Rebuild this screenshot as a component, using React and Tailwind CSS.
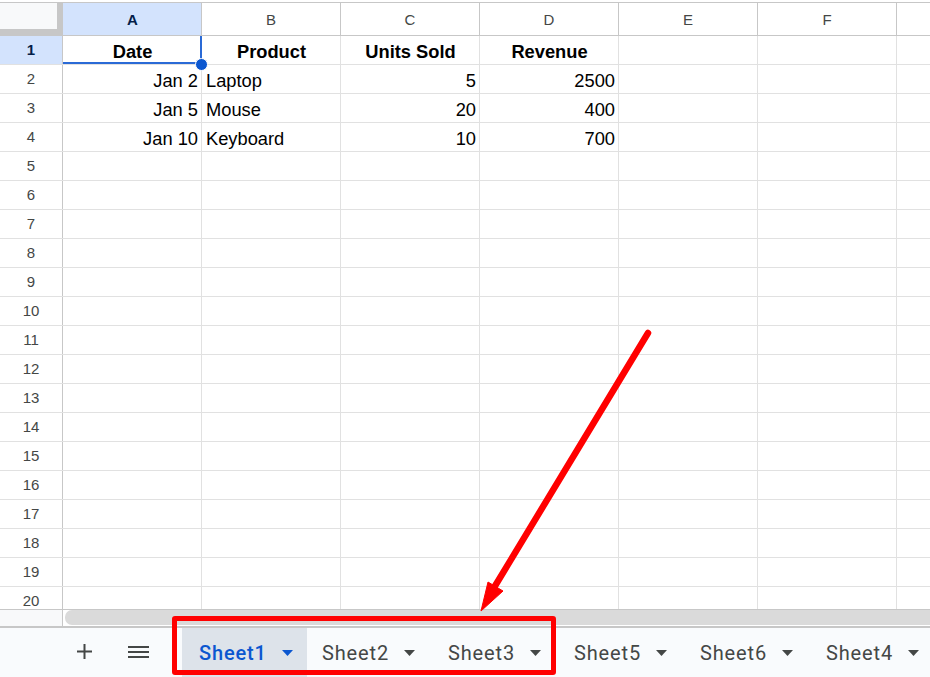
import React from "react";

const COLS = ["A", "B", "C", "D", "E", "F", ""];
const DATA = [
  ["Date", "Product", "Units Sold", "Revenue"],
  ["Jan 2", "Laptop", "5", "2500"],
  ["Jan 5", "Mouse", "20", "400"],
  ["Jan 10", "Keyboard", "10", "700"],
];
const ROWS = Array.from({ length: 20 }, (_, i) => i + 1);
const TABS = [
  { name: "Sheet1", cls: "w-[125px] bg-[#dde3ea] text-[#0b57d0] font-medium pl-[17px]", caret: "text-[#0b57d0]" },
  { name: "Sheet2", cls: "w-[126px] pl-[15px]" },
  { name: "Sheet3", cls: "w-[126px] pl-[15px]" },
  { name: "Sheet5", cls: "w-[126px] pl-[15px]" },
  { name: "Sheet6", cls: "w-[126px] pl-[15px]" },
  { name: "Sheet4", cls: "w-[126px] pl-[15px]" },
];

function Caret({ className }) {
  return (
    <svg width="11" height="6" viewBox="0 0 11 6" className={className}>
      <path d="M0 0h11L5.5 6z" fill="currentColor" />
    </svg>
  );
}

function cellClass(row, col) {
  if (row === 1) return "justify-center font-bold pl-[1px]";
  if (col === 1) return "justify-start pl-[4px]";
  return "justify-end pr-[3px]";
}

function Row({ n }) {
  const values = DATA[n - 1] || [];
  return (
    <div className="flex h-[29px] shrink-0 border-b border-[#e1e1e1]">
      <div
        className={
          "w-[63px] shrink-0 flex items-center justify-center pt-[1px] border-r border-[#c7c7c7] text-[15px] " +
          (n === 1 ? "bg-[#d3e3fd] font-bold text-[#041e49]" : "bg-white text-[#444746]")
        }
      >
        {n}
      </div>
      {COLS.map((c, i) => (
        <div
          key={c}
          className={
            "w-[139px] shrink-0 flex items-center pt-[3px] border-r border-[#e1e1e1] text-[18.3px] text-black " +
            cellClass(n, i)
          }
        >
          {values[i]}
        </div>
      ))}
    </div>
  );
}

export default function App() {
  return (
    <div className="relative w-[930px] h-[677px] overflow-hidden bg-white font-['Liberation_Sans',Arial,sans-serif]">
      {/* column header */}
      <div className="flex h-[34px] mt-[2px] border-y border-[#c7c7c7] box-border">
        <div className="w-[63px] shrink-0 border-r-[6px] border-[#c7c7c7]">
          <div className="h-[26px] bg-[#f8f9fa] border-b-[6px] border-[#c7c7c7] box-content" />
        </div>
        {COLS.map((c, i) => (
          <div
            key={c}
            className={
              "w-[139px] shrink-0 flex items-center justify-center pt-[3px] border-r border-[#c7c7c7] text-[15px] " +
              (i === 0 ? "bg-[#d3e3fd] font-bold text-[#041e49] pl-[1px]" : "text-[#444746]")
            }
          >
            {c}
          </div>
        ))}
      </div>

      {/* sheet cells */}
      <div className="relative h-[573px] overflow-hidden">
        {ROWS.map(n => (
          <Row key={n} n={n} />
        ))}
        {/* active cell outline */}
        <div className="absolute left-[63px] top-0 w-[139px] h-[28px] border-r-2 border-b-2 border-[#2a6ad6]" />
        <div className="absolute left-[195px] top-[22px] w-[13px] h-[13px] rounded-full bg-[#0b57d0] border border-white" />
      </div>

      {/* scroll bar */}
      <div className="flex h-[17px] border-t border-[#c7c7c7] bg-white">
        <div className="w-[63px] shrink-0 bg-[#f8f9fa] border-r border-[#c7c7c7]" />
        <div className="flex-1 h-[15px] ml-[2px] rounded-l-[7px] bg-[#dadada]" />
      </div>

      {/* tab bar */}
      <div className="flex h-[51px] border-t-2 border-[#c7c7c7] bg-[#f9fbfd] font-['Roboto',sans-serif] text-[20px] text-[#444746] tracking-[0.85px]">
        <div className="w-[182px] shrink-0 flex items-center pb-[2px] pl-[77px] gap-[36px]">
          <svg width="15" height="15" viewBox="0 0 15 15" className="text-[#444746] shrink-0">
            <path d="M7.5 0v15M0 7.5h15" stroke="currentColor" strokeWidth="2" />
          </svg>
          <svg width="21" height="14" viewBox="0 0 21 14" className="text-[#444746] shrink-0">
            <path d="M0 2h21M0 7h21M0 12h21" stroke="currentColor" strokeWidth="2" />
          </svg>
        </div>
        {TABS.map(t => (
          <div key={t.name} className={"shrink-0 flex items-center gap-[15px] " + t.cls}>
            <span>{t.name}</span>
            <Caret className={t.caret} />
          </div>
        ))}
      </div>

      {/* annotation: red box and arrow */}
      <div className="absolute left-[172px] top-[616px] w-[384px] h-[59px] rounded-[3px] border-[5px] border-[#ff0000]" />
      <svg className="absolute left-0 top-0 pointer-events-none" width="930" height="677" viewBox="0 0 930 677">
        <path d="M648 333L495 586" stroke="#ff0000" strokeWidth="6.5" strokeLinecap="round" fill="none" />
        <path d="M481 611L488 582L503 591z" fill="#ff0000" stroke="#ff0000" strokeWidth="1" />
      </svg>
    </div>
  );
}
